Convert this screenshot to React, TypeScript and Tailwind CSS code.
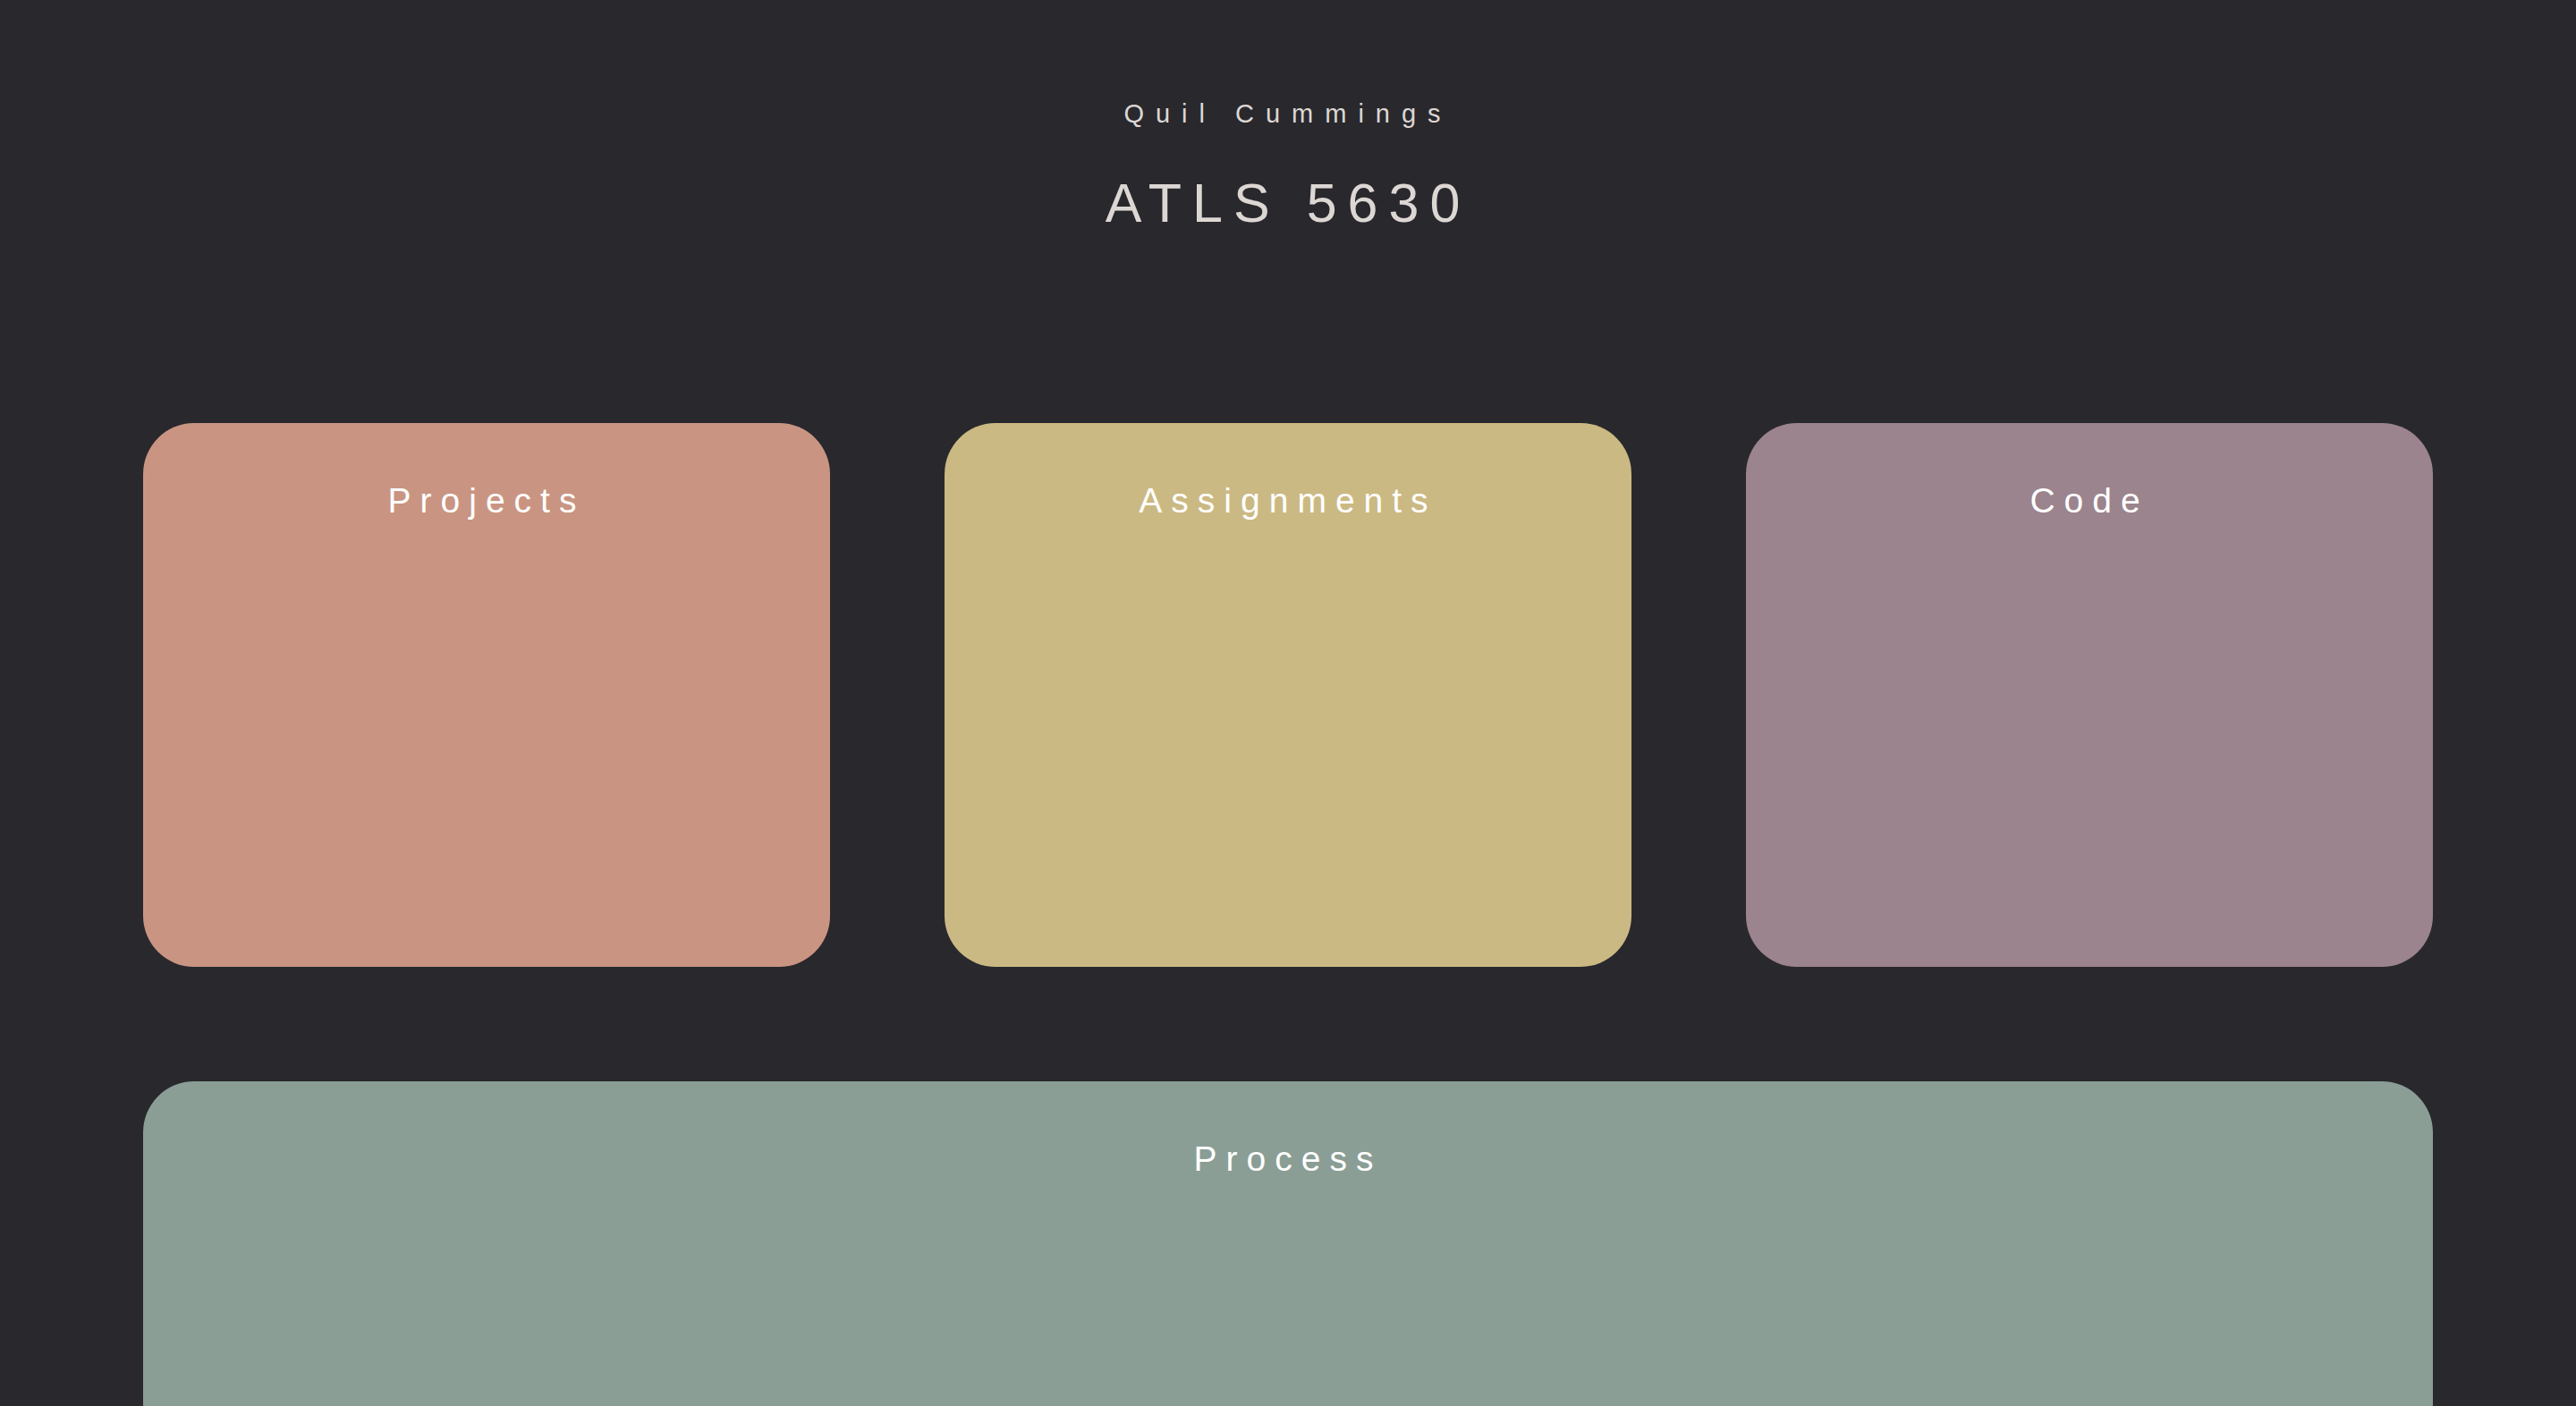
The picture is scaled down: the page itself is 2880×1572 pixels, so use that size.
import React from "react";

const cards = [
  { title: "Projects", bg: "bg-[#c99582]" },
  { title: "Assignments", bg: "bg-[#cbb984]" },
  { title: "Code", bg: "bg-[#9b848d]" },
];

export default function App() {
  return (
    <div
      className="min-h-screen w-full bg-[#29282d] px-[160px] pb-[160px]"
      style={{ fontFamily: '"Liberation Sans", Arial, sans-serif' }}
    >
      <header className="flex flex-col items-center pt-[113px] text-[#ddd7d4]">
        <p className="text-[29px] leading-[29px] tracking-[13px]">Quil Cummings</p>
        <h1 className="mt-[55px] text-[61px] leading-[61px] tracking-[12px]">ATLS 5630</h1>
      </header>
      <main className="mt-[215px] grid grid-cols-3 gap-[128px]">
        {cards.map((c) => (
          <section
            key={c.title}
            className={`${c.bg} h-[608px] rounded-[57px] pt-[67px] text-center`}
          >
            <h2 className="text-[39px] leading-[39px] tracking-[10px] text-white">{c.title}</h2>
          </section>
        ))}
        <section className="col-span-3 h-[608px] rounded-[57px] bg-[#8a9e95] pt-[67px] text-center">
          <h2 className="text-[39px] leading-[39px] tracking-[10px] text-white">Process</h2>
        </section>
      </main>
    </div>
  );
}
